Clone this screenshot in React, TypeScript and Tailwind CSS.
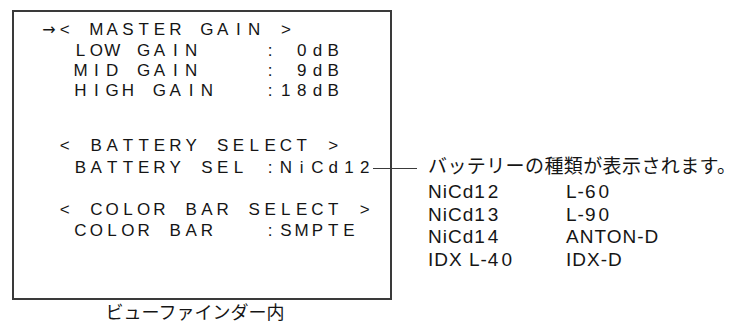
import React from "react";

// each character gets its own fixed cell, like the menu font of a viewfinder
function Cells({ text }: { text: string }) {
  return (
    <>
      {text.split("").map((c, i) => (
        <span
          key={i}
          className={`inline-block w-[15.8px] text-center ${c === "→" ? "font-['DejaVu_Sans'] text-[16px]" : ""}`}
        >
          {c === " " ? "\u00a0" : c}
        </span>
      ))}
    </>
  );
}

const LIST = [
  ["NiCd", "12", "L-", "60"],
  ["NiCd", "13", "L-", "90"],
  ["NiCd", "14", "ANTON-D", ""],
  ["IDX L-", "40", "IDX-D", ""],
];

export default function App() {
  return (
    <div className="w-[737px] h-[325px] bg-white text-[#151515] flex font-['Liberation_Sans','Noto_Sans_CJK_JP',sans-serif] overflow-hidden">
      {/* viewfinder */}
      <div className="ml-[12px] mt-[10px] flex flex-col shrink-0">
        <div className="w-[380px] h-[290px] border-2 border-[#3a3a3a] pl-[27px] pt-[8px] flex flex-col text-[17px]">
          <div className="h-[20px] leading-[20px] whitespace-nowrap">
            <Cells text="→< MASTER GAIN >" />
          </div>
          <div className="h-[20px] leading-[20px] mt-px whitespace-nowrap">
            <Cells text="  LOW GAIN    : 0dB" />
          </div>
          <div className="h-[20px] leading-[20px] whitespace-nowrap">
            <Cells text="  MID GAIN    : 9dB" />
          </div>
          <div className="h-[20px] leading-[20px] whitespace-nowrap">
            <Cells text="  HIGH GAIN   :18dB" />
          </div>
          <div className="h-[20px] leading-[20px] mt-[35px] whitespace-nowrap">
            <Cells text=" < BATTERY SELECT >" />
          </div>
          <div className="relative h-[20px] leading-[20px] mt-[2px] whitespace-nowrap">
            <Cells text="  BATTERY SEL :NiCd12" />
            <span className="absolute left-[332px] top-[10px] w-[44px] h-px bg-[#3a3a3a]" />
          </div>
          <div className="h-[20px] leading-[20px] mt-[22px] whitespace-nowrap">
            <Cells text=" < COLOR BAR SELECT >" />
          </div>
          <div className="h-[20px] leading-[20px] mt-px whitespace-nowrap">
            <Cells text="  COLOR BAR   :SMPTE" />
          </div>
        </div>
        <div className="mt-px pr-[14px] h-[24px] leading-[24px] text-center text-[18px]">ビューファインダー内</div>
      </div>

      {/* battery types */}
      <div className="ml-[36px] pt-[155px] text-[19px] flex flex-col">
        <div className="h-[24px] leading-[24px] tracking-[0.4px] whitespace-nowrap">バッテリーの種類が表示されます。</div>
        <div className="h-[2px]" />
        {LIST.map(([a, an, b, bn]) => (
          <div key={a + an} className="h-[22.5px] leading-[22.5px] flex whitespace-nowrap">
            <span className="w-[138px] tracking-[1px]">
              {a}
              <span className="tracking-[3px]">{an}</span>
            </span>
            <span className="tracking-[1px]">
              {b}
              <span className="tracking-[3px]">{bn}</span>
            </span>
          </div>
        ))}
      </div>
    </div>
  );
}
